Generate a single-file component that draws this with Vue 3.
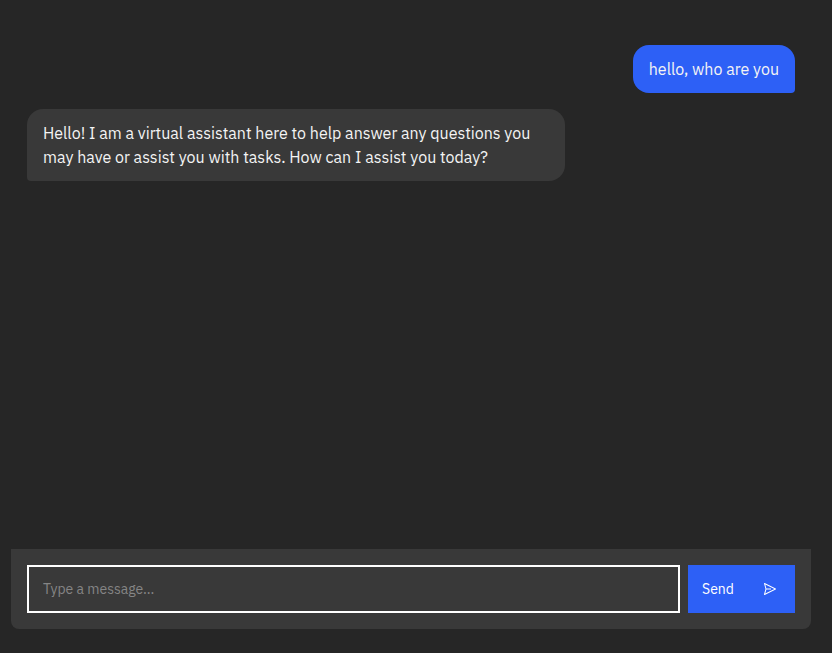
<script setup>
import { ref } from 'vue'

const messages = ref([
  { id: 1, from: 'user', text: 'hello, who are you' },
  {
    id: 2,
    from: 'assistant',
    text: 'Hello! I am a virtual assistant here to help answer any questions you may have or assist you with tasks. How can I assist you today?',
  },
])
const draft = ref('')

function send() {
  const text = draft.value.trim()
  if (!text) return
  messages.value.push({ id: messages.value.length + 1, from: 'user', text })
  draft.value = ''
}
</script>

<template>
  <main class="chat">
    <ul class="messages">
      <li v-for="m in messages" :key="m.id" class="bubble" :class="m.from">{{ m.text }}</li>
    </ul>
    <form class="composer" @submit.prevent="send">
      <input v-model="draft" class="field" type="text" placeholder="Type a message..." aria-label="Type a message..." />
      <button class="send" type="submit">
        Send
        <svg class="icon" viewBox="0 0 32 32" width="16" height="16" fill="currentColor" aria-hidden="true">
          <path d="M27.45,15.11l-22-11a1,1,0,0,0-1.08.12,1,1,0,0,0-.33,1L7,16,4,26.74A1,1,0,0,0,5,28a1,1,0,0,0,.45-.11l22-11a1,1,0,0,0,0-1.78Zm-20.9,10L8.76,17H18V15H8.76L6.55,6.89,24.76,16Z" />
        </svg>
      </button>
    </form>
  </main>
</template>

<style>
body {
  background: #262626;
}
</style>

<style scoped>
.chat {
  box-sizing: border-box;
  min-height: 100vh;
  display: flex;
  flex-direction: column;
  padding: 29px 21px 24px 11px;
  background: #262626;
  color: #f4f4f4;
  font-family: "IBM Plex Sans", Roboto, "Liberation Sans", sans-serif;
  font-size: 16px;
  line-height: 24px;
}
.messages {
  flex: 1;
  display: flex;
  flex-direction: column;
  gap: 16px;
  margin: 0;
  padding: 16px;
  list-style: none;
}
.bubble {
  box-sizing: border-box;
  max-width: 70%;
  padding: 12px 16px;
  border-radius: 16px;
}
.user {
  align-self: flex-end;
  background: #2d60f6;
  border-bottom-right-radius: 4px;
}
.assistant {
  align-self: flex-start;
  background: #393939;
  border-bottom-left-radius: 4px;
}
.composer {
  display: flex;
  gap: 8px;
  padding: 16px;
  background: #393939;
  border-radius: 0 0 8px 8px;
}
.field,
.send {
  box-sizing: border-box;
  height: 48px;
  border-radius: 0;
  font-family: inherit;
  font-size: 14px;
}
.field {
  flex: 1;
  min-width: 0;
  padding: 0 14px;
  border: 2px solid #fff;
  outline: 0;
  background: #393939;
  color: #f4f4f4;
}
.field::placeholder {
  color: #858585;
  opacity: 1;
}
.send {
  display: flex;
  align-items: center;
  justify-content: space-between;
  width: 107px;
  padding: 0 17px 0 14px;
  border: 0;
  background: #2d60f6;
  color: #fff;
  cursor: pointer;
}
</style>
